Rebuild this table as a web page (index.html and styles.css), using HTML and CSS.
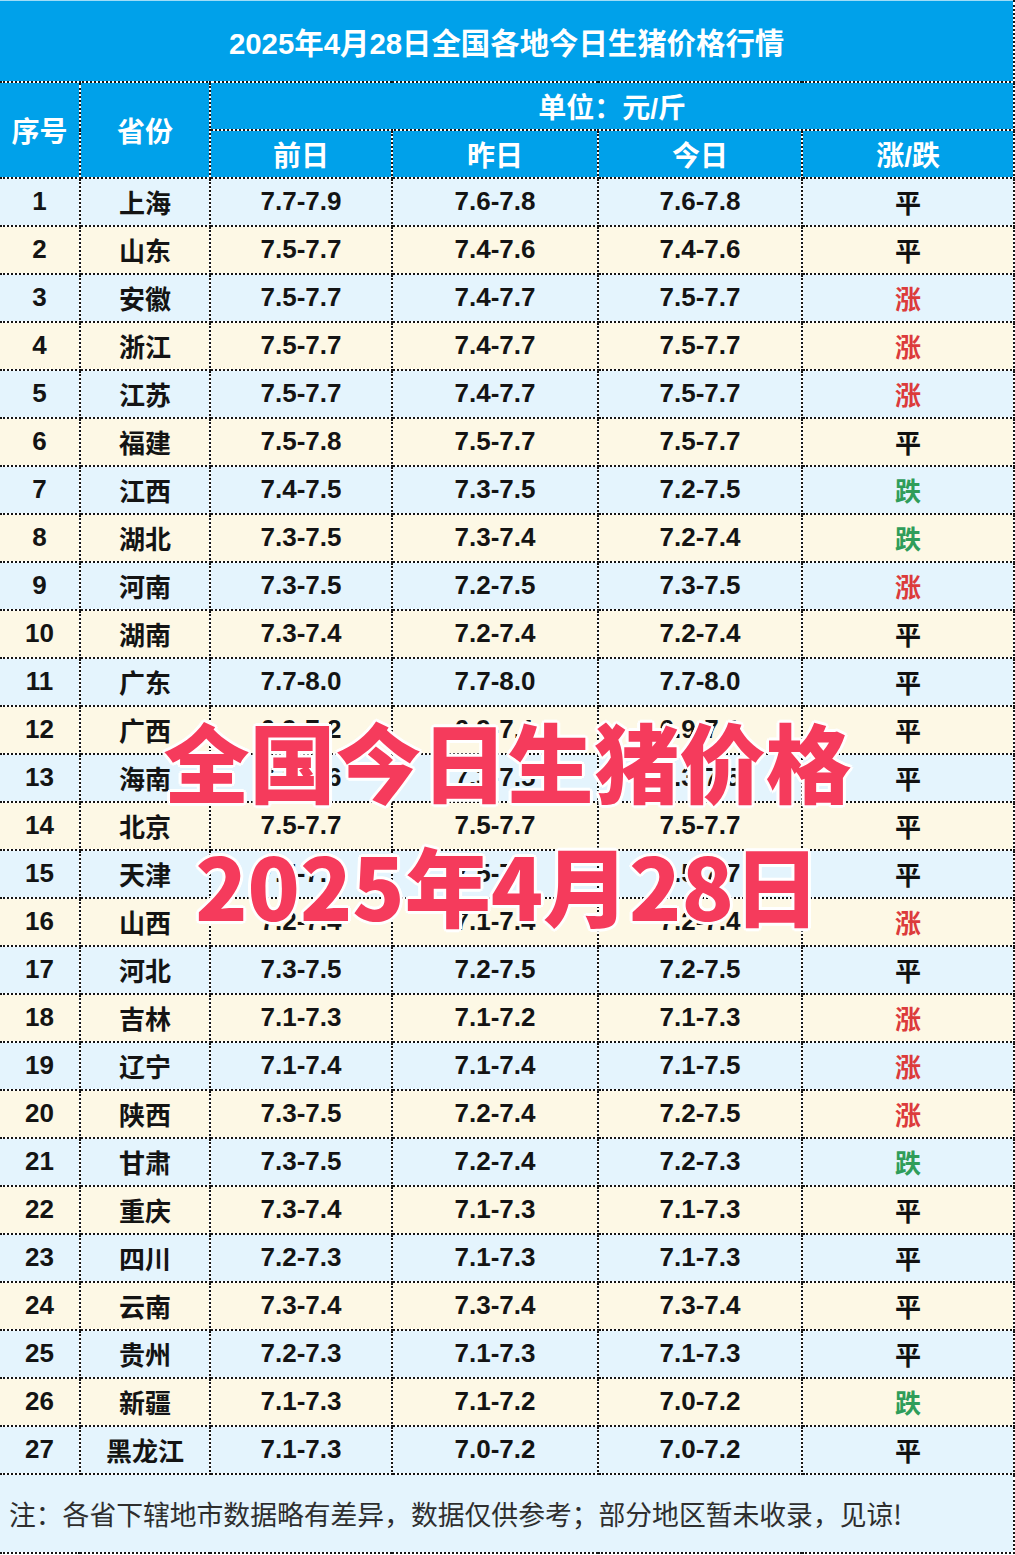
FILE: index.html
```html
<!DOCTYPE html>
<html lang="zh-CN">
<head>
<meta charset="utf-8">
<title>2025年4月28日全国各地今日生猪价格行情</title>
<link rel="stylesheet" href="styles.css">
</head>
<body>
<div class="page">
<table class="price">
  <colgroup>
    <col class="c-no"><col class="c-prov"><col class="c-d1"><col class="c-d2"><col class="c-d3"><col class="c-tr">
  </colgroup>
  <thead>
    <tr class="r-title"><th colspan="6">2025年4月28日全国各地今日生猪价格行情</th></tr>
    <tr class="r-head"><th rowspan="2">序号</th><th rowspan="2">省份</th><th colspan="4">单位：元/斤</th></tr>
    <tr class="r-head"><th>前日</th><th>昨日</th><th>今日</th><th>涨/跌</th></tr>
  </thead>
  <tbody>
    <tr class="odd"><td>1</td><td>上海</td><td>7.7-7.9</td><td>7.6-7.8</td><td>7.6-7.8</td><td class="flat">平</td></tr>
    <tr class="even"><td>2</td><td>山东</td><td>7.5-7.7</td><td>7.4-7.6</td><td>7.4-7.6</td><td class="flat">平</td></tr>
    <tr class="odd"><td>3</td><td>安徽</td><td>7.5-7.7</td><td>7.4-7.7</td><td>7.5-7.7</td><td class="up">涨</td></tr>
    <tr class="even"><td>4</td><td>浙江</td><td>7.5-7.7</td><td>7.4-7.7</td><td>7.5-7.7</td><td class="up">涨</td></tr>
    <tr class="odd"><td>5</td><td>江苏</td><td>7.5-7.7</td><td>7.4-7.7</td><td>7.5-7.7</td><td class="up">涨</td></tr>
    <tr class="even"><td>6</td><td>福建</td><td>7.5-7.8</td><td>7.5-7.7</td><td>7.5-7.7</td><td class="flat">平</td></tr>
    <tr class="odd"><td>7</td><td>江西</td><td>7.4-7.5</td><td>7.3-7.5</td><td>7.2-7.5</td><td class="down">跌</td></tr>
    <tr class="even"><td>8</td><td>湖北</td><td>7.3-7.5</td><td>7.3-7.4</td><td>7.2-7.4</td><td class="down">跌</td></tr>
    <tr class="odd"><td>9</td><td>河南</td><td>7.3-7.5</td><td>7.2-7.5</td><td>7.3-7.5</td><td class="up">涨</td></tr>
    <tr class="even"><td>10</td><td>湖南</td><td>7.3-7.4</td><td>7.2-7.4</td><td>7.2-7.4</td><td class="flat">平</td></tr>
    <tr class="odd"><td>11</td><td>广东</td><td>7.7-8.0</td><td>7.7-8.0</td><td>7.7-8.0</td><td class="flat">平</td></tr>
    <tr class="even"><td>12</td><td>广西</td><td>6.9-7.2</td><td>6.9-7.1</td><td>6.9-7.1</td><td class="flat">平</td></tr>
    <tr class="odd"><td>13</td><td>海南</td><td>7.3-7.6</td><td>7.3-7.5</td><td>7.3-7.5</td><td class="flat">平</td></tr>
    <tr class="even"><td>14</td><td>北京</td><td>7.5-7.7</td><td>7.5-7.7</td><td>7.5-7.7</td><td class="flat">平</td></tr>
    <tr class="odd"><td>15</td><td>天津</td><td>7.5-7.7</td><td>7.5-7.7</td><td>7.5-7.7</td><td class="flat">平</td></tr>
    <tr class="even"><td>16</td><td>山西</td><td>7.2-7.4</td><td>7.1-7.4</td><td>7.2-7.4</td><td class="up">涨</td></tr>
    <tr class="odd"><td>17</td><td>河北</td><td>7.3-7.5</td><td>7.2-7.5</td><td>7.2-7.5</td><td class="flat">平</td></tr>
    <tr class="even"><td>18</td><td>吉林</td><td>7.1-7.3</td><td>7.1-7.2</td><td>7.1-7.3</td><td class="up">涨</td></tr>
    <tr class="odd"><td>19</td><td>辽宁</td><td>7.1-7.4</td><td>7.1-7.4</td><td>7.1-7.5</td><td class="up">涨</td></tr>
    <tr class="even"><td>20</td><td>陕西</td><td>7.3-7.5</td><td>7.2-7.4</td><td>7.2-7.5</td><td class="up">涨</td></tr>
    <tr class="odd"><td>21</td><td>甘肃</td><td>7.3-7.5</td><td>7.2-7.4</td><td>7.2-7.3</td><td class="down">跌</td></tr>
    <tr class="even"><td>22</td><td>重庆</td><td>7.3-7.4</td><td>7.1-7.3</td><td>7.1-7.3</td><td class="flat">平</td></tr>
    <tr class="odd"><td>23</td><td>四川</td><td>7.2-7.3</td><td>7.1-7.3</td><td>7.1-7.3</td><td class="flat">平</td></tr>
    <tr class="even"><td>24</td><td>云南</td><td>7.3-7.4</td><td>7.3-7.4</td><td>7.3-7.4</td><td class="flat">平</td></tr>
    <tr class="odd"><td>25</td><td>贵州</td><td>7.2-7.3</td><td>7.1-7.3</td><td>7.1-7.3</td><td class="flat">平</td></tr>
    <tr class="even"><td>26</td><td>新疆</td><td>7.1-7.3</td><td>7.1-7.2</td><td>7.0-7.2</td><td class="down">跌</td></tr>
    <tr class="odd"><td>27</td><td>黑龙江</td><td>7.1-7.3</td><td>7.0-7.2</td><td>7.0-7.2</td><td class="flat">平</td></tr>
  </tbody>
  <tfoot>
    <tr class="r-note"><td colspan="6">注：各省下辖地市数据略有差异，数据仅供参考；部分地区暂未收录，见谅!</td></tr>
  </tfoot>
</table>
<div class="overlay">
  <div class="ov-line ov-1">全国今日生猪价格</div>
  <div class="ov-line ov-2">2025年4月28日</div>
</div>
</div>
</body>
</html>
```
FILE: styles.css
```css
html, body {
  margin: 0;
  padding: 0;
  background: #ffffff;
}
body {
  font-family: "Liberation Sans", "Noto Sans CJK SC", sans-serif;
  color: #111111;
}
.page {
  position: relative;
  width: 1015px;
  height: 1555px;
  overflow: hidden;
}
.price {
  border-collapse: collapse;
  table-layout: fixed;
  width: 1014px;
  border-top: 1px solid #9fdcf7;
}
.c-no { width: 80px; }
.c-prov { width: 130px; }
.c-d1 { width: 182px; }
.c-d2 { width: 206px; }
.c-d3 { width: 204px; }
.c-tr { width: 212px; }

.price th,
.price td {
  border: 2px dotted #151515;
  padding: 0;
  text-align: center;
  vertical-align: middle;
  white-space: nowrap;
  overflow: hidden;
}
.price tr > :first-child {
  border-left: none;
}
.r-title th {
  border-top: none;
}

.price thead th {
  background: #00a1ea;
  color: #ffffff;
  font-weight: bold;
  font-size: 28px;
}
.r-title {
  height: 81px;
}
.price .r-title th {
  font-size: 29.4px;
  letter-spacing: 0;
}
.r-head {
  height: 48px;
}

.price tbody tr {
  height: 48px;
}
.price tbody td {
  font-size: 26px;
  font-weight: bold;
  color: #141414;
}
.odd td {
  background: #e4f4fd;
}
.even td {
  background: #fdf8e5;
}
.price tbody td.up {
  color: #dc3b3b;
}
.price tbody td.down {
  color: #2f9d5a;
}
.price tbody td.flat {
  color: #111111;
}

.r-note {
  height: 79px;
}
.r-note td {
  background: #e4f4fd;
  text-align: left;
  padding-left: 9px;
  font-family: "Noto Sans CJK SC", sans-serif;
  font-weight: normal;
  font-size: 26.8px;
  color: #2e2e2e;
}

.overlay {
  position: absolute;
  left: 0;
  top: 705px;
  width: 1015px;
  text-align: center;
  font-family: "Noto Sans CJK SC", sans-serif;
  font-weight: 900;
  color: #f53b5c;
  text-shadow:
    3px 0 0 #fff, -3px 0 0 #fff, 0 3px 0 #fff, 0 -3px 0 #fff,
    2px 2px 0 #fff, -2px 2px 0 #fff, 2px -2px 0 #fff, -2px -2px 0 #fff;
}
.ov-line {
  line-height: 1;
  white-space: nowrap;
}
.ov-1 {
  font-size: 86px;
  letter-spacing: 0;
  margin-top: 12px;
}
.ov-2 {
  font-size: 86px;
  margin-top: 38px;
  letter-spacing: 0;
}
```
